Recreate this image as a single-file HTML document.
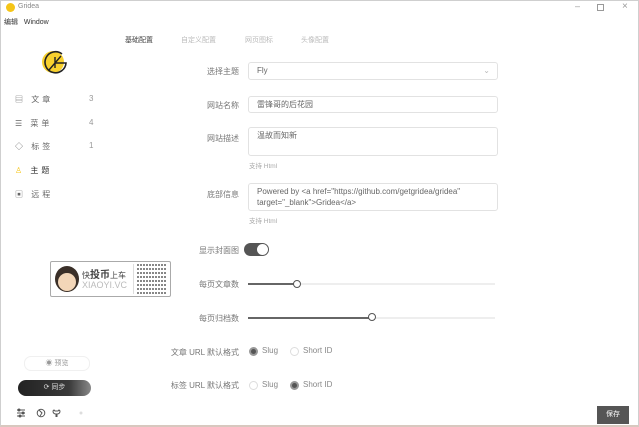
<!DOCTYPE html>
<html><head><meta charset="utf-8"><style>
*{margin:0;padding:0;box-sizing:border-box}
body{width:639px;height:427px;overflow:hidden;background:#fff;font-family:"Liberation Sans","Noto Sans CJK SC",sans-serif;color:#555;position:relative;font-size:8px}
.a{position:absolute;white-space:nowrap}
.win{position:absolute;left:0;top:0;width:639px;height:427px;border:1px solid #cfcfcf;border-bottom:2px solid #d8c8bf}
.lbl{position:absolute;right:400px;font-size:8px;color:#777;text-align:right}
.inp{position:absolute;left:248px;width:250px;border:1px solid #e2e2e2;border-radius:3px;font-size:8px;color:#666;padding:4px 8px;line-height:12px}
.hint{position:absolute;left:249px;font-size:6.5px;color:#aaa}
.nav{position:absolute;left:15px;font-size:8px;color:#666;letter-spacing:3px}
.cnt{position:absolute;left:89px;font-size:8px;color:#999}
.track{position:absolute;left:248px;width:247px;height:2px;background:#eee}
.thumb{position:absolute;width:8px;height:8px;border:1.5px solid #555;border-radius:50%;background:#fff}
.rad{position:absolute;width:9px;height:9px;border-radius:50%;border:1px solid #ddd;background:#fff}
.rad.on{background:#555;border:2px solid #999}
</style></head><body>
<div class="win"></div>
<div class="a" style="left:6px;top:3px;width:9px;height:9px;border-radius:50%;background:#f5c518"></div>
<div class="a" style="left:18px;top:3px;font-size:7px;color:#888">Gridea</div>
<div class="a" style="left:575px;top:1px;font-size:9px;color:#999">–</div>
<div class="a" style="left:597px;top:4px;width:7px;height:7px;border:1px solid #999"></div>
<div class="a" style="left:622px;top:1px;font-size:10px;color:#999">×</div>
<div class="a" style="left:4px;top:17px;font-size:7px;color:#333">编辑&nbsp;&nbsp;&nbsp;Window</div>
<div class="a" style="left:125px;top:35px;font-size:7px;color:#444">基础配置</div>
<div class="a" style="left:181px;top:35px;font-size:7px;color:#bbb">自定义配置</div>
<div class="a" style="left:245px;top:35px;font-size:7px;color:#bbb">网页图标</div>
<div class="a" style="left:301px;top:35px;font-size:7px;color:#bbb">头像配置</div>
<svg class="a" style="left:40px;top:48px" width="30" height="28" viewBox="0 0 30 28"><circle cx="13" cy="14" r="11" fill="#f8d12e"/><path d="M22 6A10.5 10.5 0 1 0 26 15H15" fill="none" stroke="#222" stroke-width="1.6"/><path d="M9 22L21 8M15 9v11" stroke="#222" stroke-width="1.4"/></svg>
<div class="nav" style="top:94px">▤ 文章</div><div class="cnt" style="top:94px">3</div>
<div class="nav" style="top:118px">☰ 菜单</div><div class="cnt" style="top:118px">4</div>
<div class="nav" style="top:141px">◇ 标签</div><div class="cnt" style="top:141px">1</div>
<div class="nav" style="top:165px;color:#333"><span style="color:#f5c518">♙</span> 主题</div>
<div class="nav" style="top:189px">▣ 远程</div>
<div class="a" style="left:50px;top:261px;width:121px;height:36px;border:1.5px solid #aaa;border-radius:2px;background:#fff"></div>
<div class="a" style="left:55px;top:266px;width:24px;height:26px;border-radius:50%;background:#3a2f28"></div>
<div class="a" style="left:58px;top:273px;width:18px;height:18px;border-radius:50%;background:#f3d6b8"></div>
<div class="a" style="left:82px;top:266px;font-size:8px;color:#444">快<b style="font-size:10px">投币</b>上车</div>
<div class="a" style="left:82px;top:280px;font-size:9px;color:#bbb">XIAOYI.VC</div>
<div class="a" style="left:133px;top:264px;width:1px;height:30px;background:#ddd"></div>
<div class="a" style="left:137px;top:264px;width:30px;height:30px;background:repeating-linear-gradient(0deg,#555 0 2px,#fff 2px 4px),#fff;opacity:.7"></div>
<div class="a" style="left:137px;top:264px;width:30px;height:30px;background:repeating-linear-gradient(90deg,transparent 0 2px,#fff 2px 3px);"></div>
<div class="lbl" style="top:66px">选择主题</div>
<div class="inp" style="top:62px;height:18px;padding-top:2px">Fly<span style="position:absolute;right:7px;color:#bbb">⌄</span></div>
<div class="lbl" style="top:100px">网站名称</div>
<div class="inp" style="top:96px;height:17px;padding-top:2px">雷锋哥的后花园</div>
<div class="lbl" style="top:133px">网站描述</div>
<div class="inp" style="top:127px;height:29px;padding-top:2px">温故而知新</div>
<div class="hint" style="top:160px">支持 Html</div>
<div class="lbl" style="top:189px">底部信息</div>
<div class="inp" style="top:183px;height:28px;padding-top:2px;line-height:11px">Powered by &lt;a href="https://github.com/getgridea/gridea"<br>target="_blank"&gt;Gridea&lt;/a&gt;</div>
<div class="hint" style="top:215px">支持 Html</div>
<div class="lbl" style="top:245px">显示封面图</div>
<div class="a" style="left:244px;top:243px;width:25px;height:13px;border-radius:7px;background:#555"></div>
<div class="a" style="left:257px;top:244px;width:11px;height:11px;border-radius:50%;background:#fff"></div>
<div class="lbl" style="top:279px">每页文章数</div>
<div class="track" style="top:283px"></div><div class="a" style="left:248px;top:283px;width:49px;height:2px;background:#666"></div>
<div class="thumb" style="left:293px;top:280px"></div>
<div class="lbl" style="top:313px">每页归档数</div>
<div class="track" style="top:317px"></div><div class="a" style="left:248px;top:317px;width:124px;height:2px;background:#666"></div>
<div class="thumb" style="left:368px;top:313px"></div>
<div class="lbl" style="top:347px">文章 URL 默认格式</div>
<div class="rad on" style="left:249px;top:347px"></div><div class="a" style="left:262px;top:346px;font-size:8px;color:#888">Slug</div>
<div class="rad" style="left:290px;top:347px"></div><div class="a" style="left:303px;top:346px;font-size:8px;color:#888">Short ID</div>
<div class="lbl" style="top:380px">标签 URL 默认格式</div>
<div class="rad" style="left:249px;top:381px"></div><div class="a" style="left:262px;top:380px;font-size:8px;color:#888">Slug</div>
<div class="rad on" style="left:290px;top:381px"></div><div class="a" style="left:303px;top:380px;font-size:8px;color:#888">Short ID</div>
<div class="a" style="left:24px;top:356px;width:66px;height:15px;border:1px solid #f0f0f0;border-radius:7px;text-align:center;font-size:7px;line-height:13px;color:#999">◉ 预览</div>
<div class="a" style="left:18px;top:380px;width:73px;height:16px;border-radius:8px;background:linear-gradient(90deg,#222,#3a3a3a 70%,#888);text-align:center;font-size:7px;line-height:16px;color:#ddd">⟳ 同步</div>
<svg class="a" style="left:16px;top:408px" width="70" height="10" viewBox="0 0 70 10" fill="none" stroke="#555" stroke-width="1"><path d="M1 2h8M1 5h8M1 8h8"/><circle cx="3" cy="2" r="1" fill="#555"/><circle cx="7" cy="5" r="1" fill="#555"/><circle cx="4" cy="8" r="1" fill="#555"/><circle cx="25" cy="5" r="3.8"/><path d="M23 2l3 3-2 3"/><path d="M40 9V6c-2 0-3-1-3-3l1-1 1 1h3l1-1 1 1c0 2-1 3-3 3v3"/><circle cx="65" cy="5" r="1.5" fill="#ddd" stroke="none"/></svg>
<div class="a" style="left:597px;top:406px;width:32px;height:18px;background:#555;color:#fff;font-size:7px;line-height:18px;text-align:center">保存</div>
</body></html>
